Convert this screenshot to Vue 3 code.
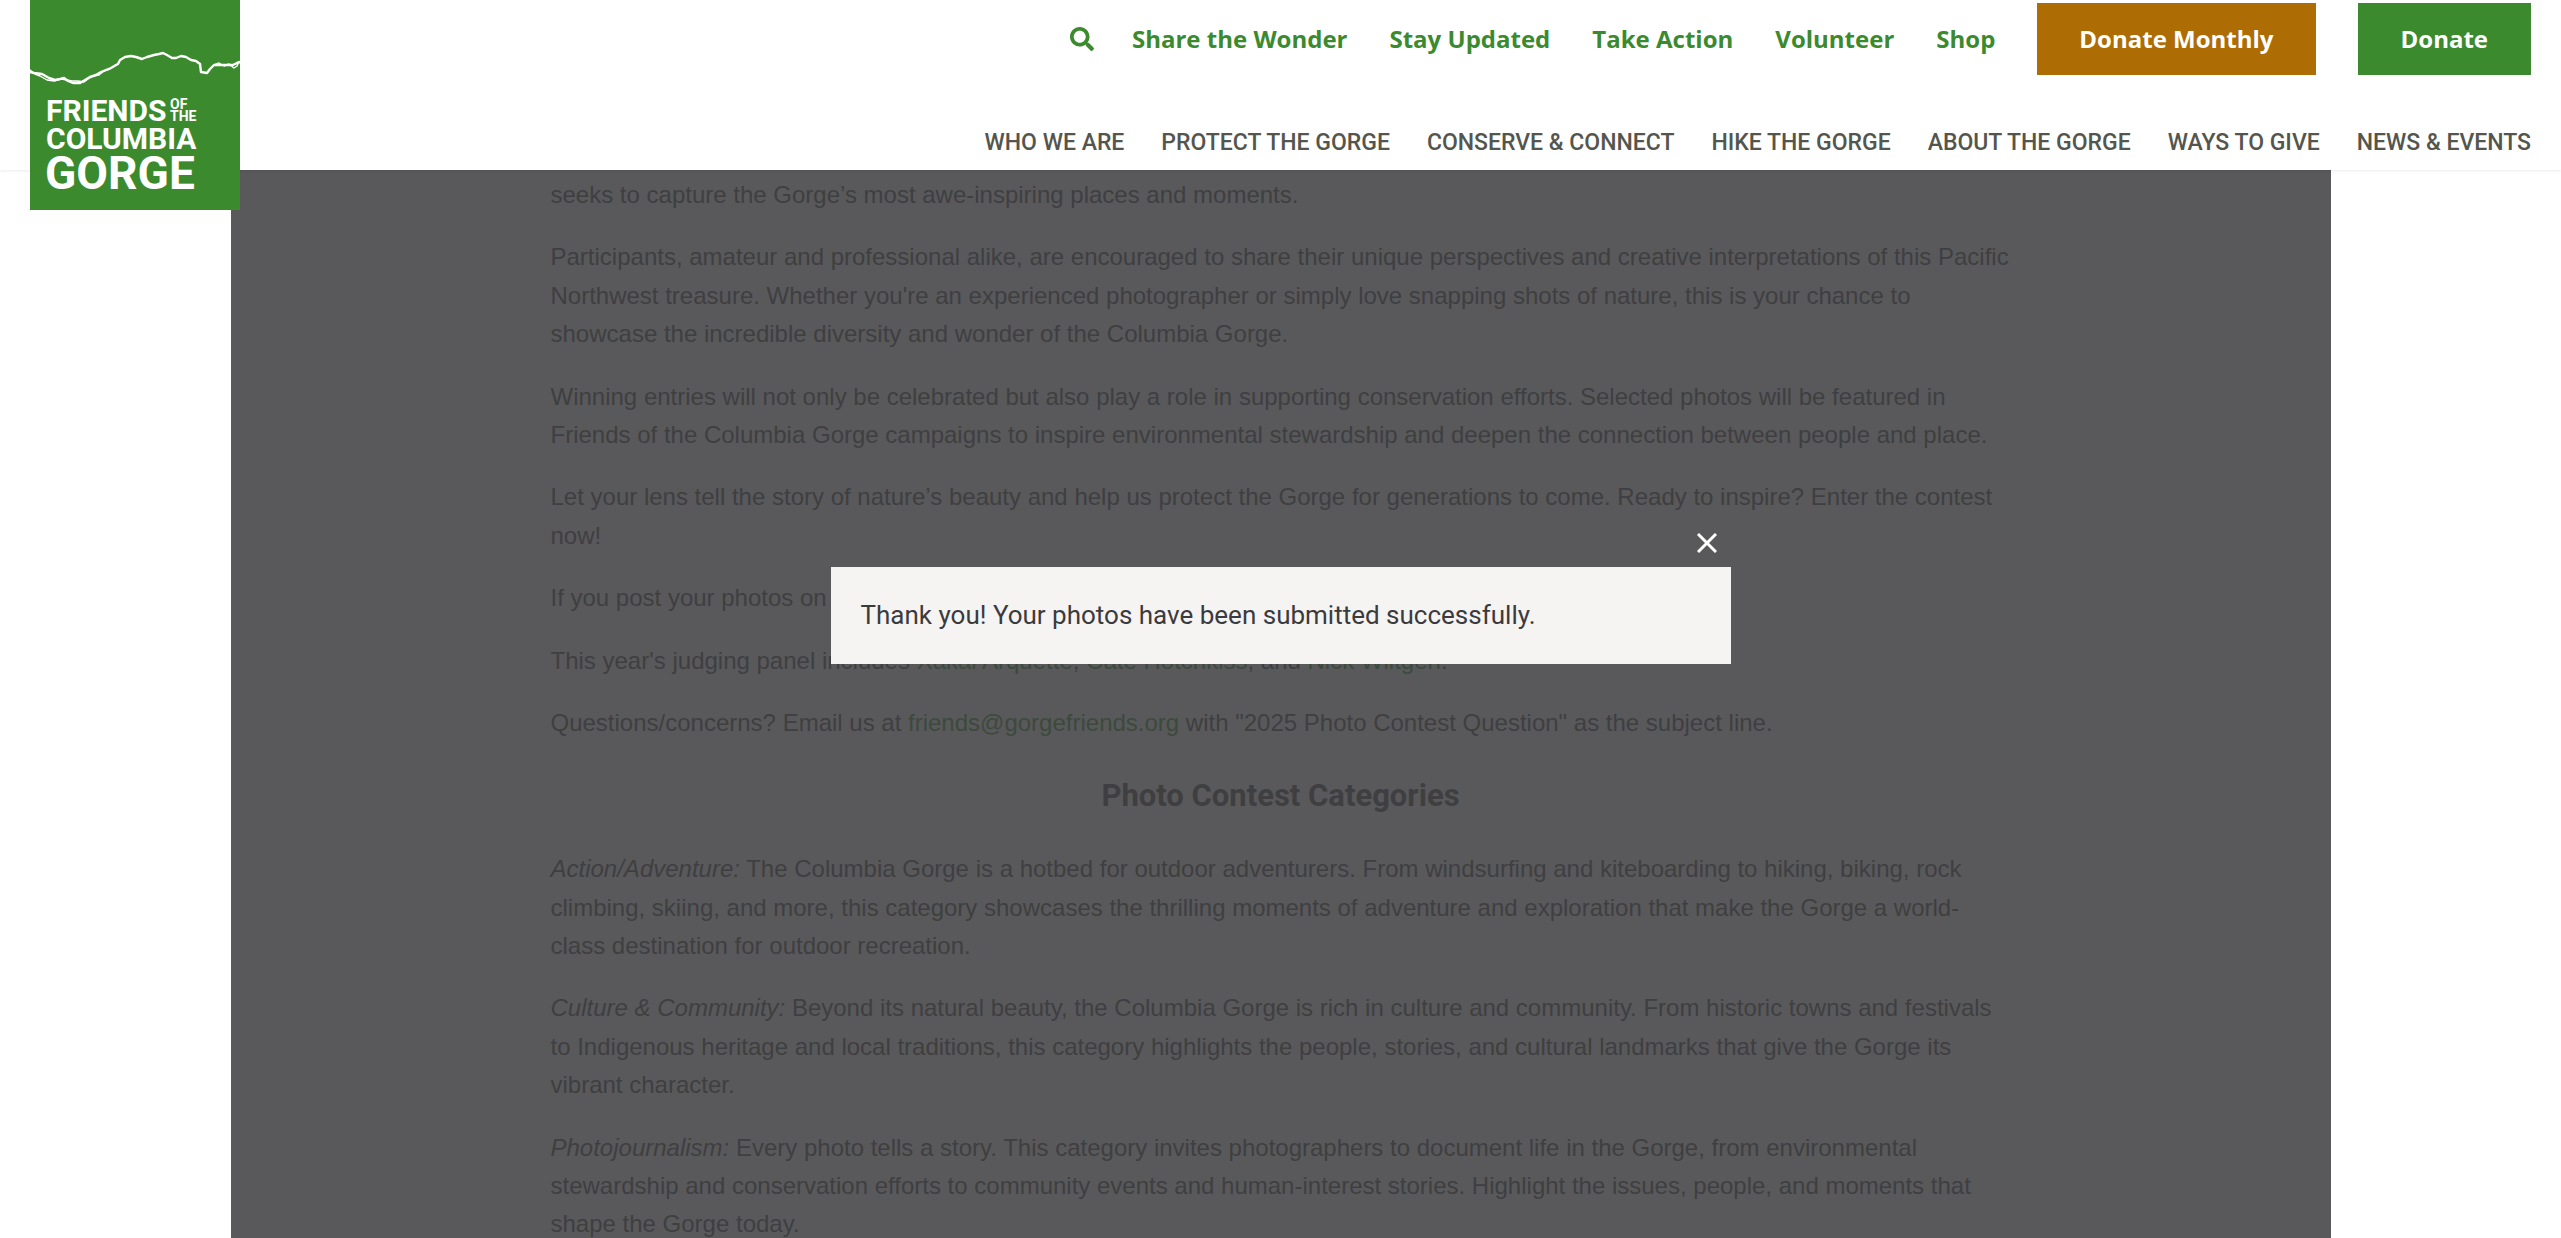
<script setup>
import { ref } from 'vue'

const open = ref(true)
const utility = ['Share the Wonder', 'Stay Updated', 'Take Action', 'Volunteer', 'Shop']
const sections = [
  'Who We Are',
  'Protect the Gorge',
  'Conserve & Connect',
  'Hike the Gorge',
  'About the Gorge',
  'Ways to Give',
  'News & Events',
]
const categories = [
  {
    name: 'Action/Adventure:',
    text: 'The Columbia Gorge is a hotbed for outdoor adventurers. From windsurfing and kiteboarding to hiking, biking, rock climbing, skiing, and more, this category showcases the thrilling moments of adventure and exploration that make the Gorge a world-class destination for outdoor recreation.',
  },
  {
    name: 'Culture & Community:',
    text: 'Beyond its natural beauty, the Columbia Gorge is rich in culture and community. From historic towns and festivals to Indigenous heritage and local traditions, this category highlights the people, stories, and cultural landmarks that give the Gorge its vibrant character.',
  },
  {
    name: 'Photojournalism:',
    text: 'Every photo tells a story. This category invites photographers to document life in the Gorge, from environmental stewardship and conservation efforts to community events and human-interest stories. Highlight the issues, people, and moments that shape the Gorge today.',
  },
]
</script>

<template>
  <div class="page">
    <header class="header">
      <a class="logo" href="#" aria-label="Friends of the Columbia Gorge">
        <svg viewBox="0 0 210 210" width="210" height="210">
          <rect width="210" height="210" fill="#3c8a2e" />
          <g fill="none" stroke="#fff" stroke-linejoin="round" stroke-linecap="round">
            <path stroke-width="2.4" d="M0 72 L4 73 L12 74 L19 78 L25 80 L30 79 L34 78 L38 81 L43 83 L50 83 L55 80 L60 77 L66 75 L71 72 L76 70 L81 68 L86 65 L88 64 L90 60 L95 57 L101 56 L106 57 L112 59 L117 57 L124 55 L129 54 L133 53 L137 55 L142 58 L146 58 L151 56 L156 57 L161 60 L166 61 L170 64 L171 72 L177 73 L180 69 L184 65 L190 65 L197 65 L203 65 L207 63 L210 62" />
            <path stroke-width="1.4" d="M0 70 L5 74 L10 76 L17 80 L24 81 L31 79 L37 80 L42 81 L48 81 L54 82 L58 79 L63 76 L69 75 L74 71 L80 69 M184 65 L189 63 L194 66 L199 64 L204 68 L207 66 L209 62" />
          </g>
          <g class="logo-text" fill="#fff">
            <text x="16" y="121" font-size="30">FRIENDS</text>
            <text x="140" y="109" font-size="14">OF</text>
            <text x="140" y="121" font-size="14">THE</text>
            <text x="16" y="149" font-size="30">COLUMBIA</text>
            <text x="15" y="189" font-size="46">GORGE</text>
          </g>
        </svg>
      </a>
      <div class="menus">
        <nav class="utility" aria-label="Utility">
          <button class="search" type="button" aria-label="Search">
            <svg viewBox="0 0 512 512" width="24" height="24">
              <path fill="currentColor" d="M505 442.700 405.300 343c-4.500-4.500-10.600-7-17-7H372c27.600-35.300 44-79.700 44-128C416 93.100 322.900 0 208 0S0 93.100 0 208s93.100 208 208 208c48.300 0 92.700-16.400 128-44v16.300c0 6.400 2.500 12.500 7 17l99.700 99.700c9.400 9.400 24.600 9.400 33.900 0l28.300-28.300c9.400-9.400 9.400-24.600.1-34zM208 336c-70.700 0-128-57.200-128-128 0-70.700 57.200-128 128-128 70.700 0 128 57.200 128 128 0 70.700-57.200 128-128 128z" />
            </svg>
          </button>
          <a v-for="item in utility" :key="item" href="#">{{ item }}</a>
          <a class="cta monthly" href="#">Donate Monthly</a>
          <a class="cta" href="#">Donate</a>
        </nav>
        <nav class="sections" aria-label="Main">
          <a v-for="item in sections" :key="item" href="#">{{ item }}</a>
        </nav>
      </div>
    </header>

    <main class="panel">
      <article class="copy">
        <p>seeks to capture the Gorge’s most awe-inspiring places and moments.</p>
        <p>Participants, amateur and professional alike, are encouraged to share their unique perspectives and creative interpretations of this Pacific Northwest treasure. Whether you're an experienced photographer or simply love snapping shots of nature, this is your chance to showcase the incredible diversity and wonder of the Columbia Gorge.</p>
        <p>Winning entries will not only be celebrated but also play a role in supporting conservation efforts. Selected photos will be featured in Friends of the Columbia Gorge campaigns to inspire environmental stewardship and deepen the connection between people and place.</p>
        <p>Let your lens tell the story of nature’s beauty and help us protect the Gorge for generations to come. Ready to inspire? Enter the contest now!</p>
        <p>If you post your photos on</p>
        <p>This year's judging panel includes <a href="#">Xakai Arquette</a>, <a href="#">Cate Hotchkiss</a>, and <a href="#">Nick Wiltgen</a>.</p>
        <p>Questions/concerns? Email us at <a href="#">friends@gorgefriends.org</a> with "2025 Photo Contest Question" as the subject line.</p>
        <h2>Photo Contest Categories</h2>
        <p v-for="category in categories" :key="category.name">
          <em>{{ category.name }}</em> {{ category.text }}
        </p>
      </article>
    </main>

    <div v-if="open" class="overlay">
      <div class="dialog" role="dialog" aria-label="Submission received">
        <button class="close" type="button" aria-label="Close" @click="open = false">
          <svg viewBox="0 0 20 20" width="20" height="20">
            <path d="M1 1 L19 19 M19 1 L1 19" stroke="currentColor" stroke-width="3" />
          </svg>
        </button>
        <p>Thank you! Your photos have been submitted successfully.</p>
      </div>
    </div>
  </div>
</template>

<style>
body {
  margin: 0;
  background: #fff;
}
</style>

<style scoped>
.page {
  height: 100vh;
  overflow: hidden;
}
a {
  text-decoration: none;
}
button {
  padding: 0;
  border: 0;
  background: none;
  cursor: pointer;
}
svg {
  display: block;
}
.header {
  position: relative;
  z-index: 1;
  display: flex;
  justify-content: space-between;
  height: 170px;
  padding: 0 30px;
  box-sizing: border-box;
  background: #fff;
  box-shadow: 0 1px 3px rgba(0, 0, 0, 0.08);
}
.logo {
  height: 210px;
}
.logo-text {
  font-family: Roboto, sans-serif;
  font-weight: 700;
}
.menus {
  display: flex;
  flex-direction: column;
  align-items: flex-end;
  padding-top: 3px;
}
.utility {
  display: flex;
  align-items: center;
  gap: 42px;
  font: 700 24px/72px "Open Sans", sans-serif;
}
.utility a,
.search {
  color: #3c8a2e;
}
.search {
  margin-right: -4px;
}
.utility .cta {
  padding: 0 43px;
  background: #3c8a2e;
  color: #fff;
}
.utility .monthly {
  padding: 0 42px;
  background: #ad6c04;
}
.sections {
  display: flex;
  gap: 37px;
  padding-top: 52px;
  font: 500 23px/32px Roboto, sans-serif;
  text-transform: uppercase;
}
.sections a {
  color: #54564e;
}
.panel {
  max-width: 2100px;
  margin: 0 auto;
  background: #59595b;
}
.copy {
  max-width: 1460px;
  margin: 0 auto;
  padding: 6px 0 24px;
  font: 24px/1.6 "Liberation Sans", sans-serif;
  color: #3f3f41;
}
.copy p {
  margin: 0 0 24px;
}
.copy a {
  color: #3c4a3d;
}
.copy h2 {
  margin: 33px 0 34px;
  font: 700 31px/41px Roboto, sans-serif;
  text-align: center;
}
.overlay {
  position: fixed;
  inset: 0;
  z-index: 2;
  display: flex;
  align-items: center;
  justify-content: center;
  padding-bottom: 7px;
}
.dialog {
  position: relative;
  width: 900px;
  padding: 30px;
  box-sizing: border-box;
  background: #f6f4f3;
}
.dialog p {
  margin: 0;
  font: 26px/37px Roboto, sans-serif;
  color: #3b3b3d;
}
.close {
  position: absolute;
  right: 14px;
  bottom: 100%;
  margin-bottom: 14px;
  color: #fff;
}
</style>
